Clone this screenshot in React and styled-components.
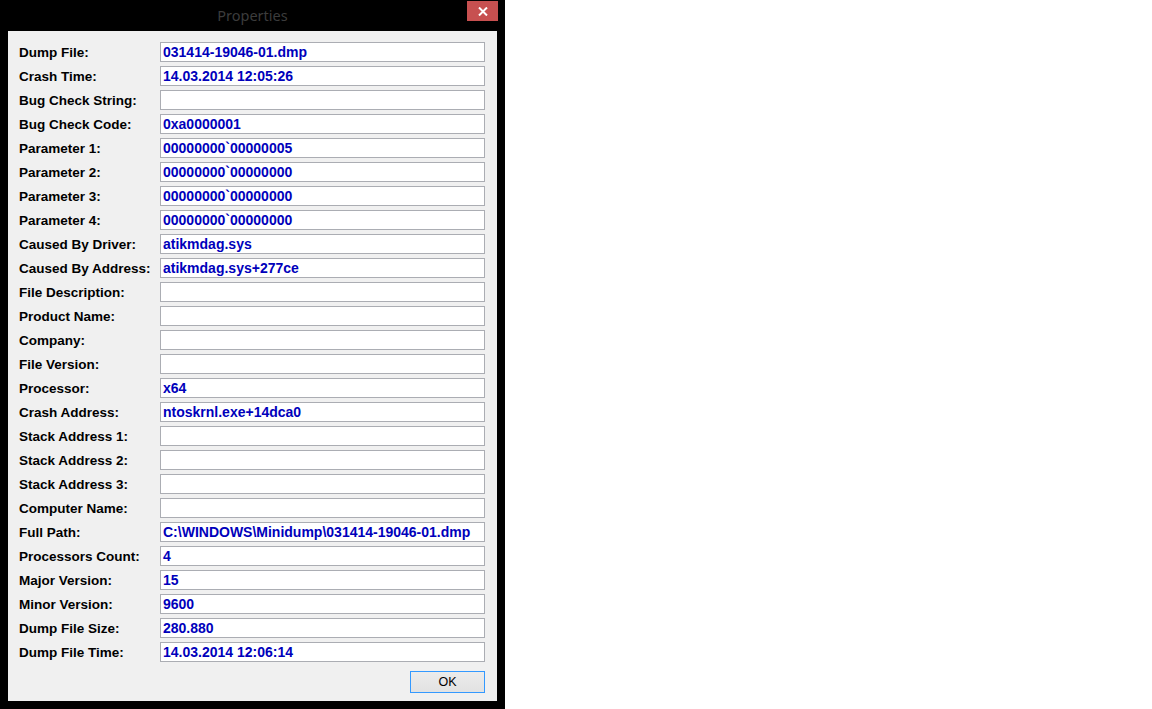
import React from 'react';
import styled, { createGlobalStyle } from 'styled-components';

const GlobalStyle = createGlobalStyle`
    html, body {
        margin: 0;
        padding: 0;
        background: #ffffff;
    }
    body {
        font-family: "Liberation Sans", Arial, sans-serif;
    }
`

const Window = styled.div`
    width: 505px;
    height: 709px;
    background: #000000;
    box-sizing: border-box;
    padding: 0 8px 8px 8px;
    display: flex;
    flex-direction: column;
`

const TitleBar = styled.div`
    height: 31px;
    margin: 0 -8px;
    display: grid;
    grid-template-columns: 1fr auto 1fr;
    align-items: start;
`

const Title = styled.div`
    grid-column: 2;
    font-family: "Noto Sans", "Open Sans", sans-serif;
    font-size: 14.5px;
    line-height: 31px;
    color: #3c3c3c;
`

const CloseBtn = styled.div`
    grid-column: 3;
    justify-self: end;
    margin-top: 1px;
    margin-right: 7px;
    width: 31px;
    height: 20px;
    background: #c75050;
    display: flex;
    align-items: center;
    justify-content: center;
`

const Panel = styled.div`
    flex: 1;
    background: #f0f0f0;
    box-sizing: border-box;
    padding: 11px 12px 8px 11px;
    display: flex;
    flex-direction: column;
`

const Fields = styled.div`
    display: grid;
    grid-template-columns: 141px 325px;
    grid-auto-rows: 20px;
    row-gap: 4px;
    align-items: center;
`

const Label = styled.div`
    font-size: 13.5px;
    font-weight: bold;
    color: #000000;
    white-space: nowrap;
`

const Value = styled.div`
    height: 20px;
    box-sizing: border-box;
    border: 1px solid #abadb3;
    background: #ffffff;
    padding: 0 2px;
    font-size: 14px;
    font-weight: bold;
    line-height: 18px;
    color: #0000bb;
    white-space: nowrap;
    overflow: hidden;
`

const Footer = styled.div`
    margin-top: auto;
    display: flex;
    justify-content: flex-end;
`

const Button = styled.button`
    width: 75px;
    height: 22px;
    box-sizing: border-box;
    border: 1px solid #3399ff;
    background: linear-gradient(#ececec, #e2e2e2);
    font-family: "Liberation Sans", Arial, sans-serif;
    font-size: 12.5px;
    color: #000000;
    padding: 0;
    margin: 0;
`

const rows = [
    ['Dump File:', '031414-19046-01.dmp'],
    ['Crash Time:', '14.03.2014 12:05:26'],
    ['Bug Check String:', ''],
    ['Bug Check Code:', '0xa0000001'],
    ['Parameter 1:', '00000000`00000005'],
    ['Parameter 2:', '00000000`00000000'],
    ['Parameter 3:', '00000000`00000000'],
    ['Parameter 4:', '00000000`00000000'],
    ['Caused By Driver:', 'atikmdag.sys'],
    ['Caused By Address:', 'atikmdag.sys+277ce'],
    ['File Description:', ''],
    ['Product Name:', ''],
    ['Company:', ''],
    ['File Version:', ''],
    ['Processor:', 'x64'],
    ['Crash Address:', 'ntoskrnl.exe+14dca0'],
    ['Stack Address 1:', ''],
    ['Stack Address 2:', ''],
    ['Stack Address 3:', ''],
    ['Computer Name:', ''],
    ['Full Path:', 'C:\\WINDOWS\\Minidump\\031414-19046-01.dmp'],
    ['Processors Count:', '4'],
    ['Major Version:', '15'],
    ['Minor Version:', '9600'],
    ['Dump File Size:', '280.880'],
    ['Dump File Time:', '14.03.2014 12:06:14'],
]

const App = () => {
    return (
        <>
            <GlobalStyle />
            <Window>
                <TitleBar>
                    <Title>Properties</Title>
                    <CloseBtn>
                        <svg width="10" height="9" viewBox="0 0 10 9">
                            <path d="M1 0.5 L9 8.5 M9 0.5 L1 8.5" stroke="#ffffff" strokeWidth="2" />
                        </svg>
                    </CloseBtn>
                </TitleBar>
                <Panel>
                    <Fields>
                        {rows.map(([label, value]) => (
                            <React.Fragment key={label}>
                                <Label>{label}</Label>
                                <Value>{value}</Value>
                            </React.Fragment>
                        ))}
                    </Fields>
                    <Footer>
                        <Button>OK</Button>
                    </Footer>
                </Panel>
            </Window>
        </>
    )
}

export default App
